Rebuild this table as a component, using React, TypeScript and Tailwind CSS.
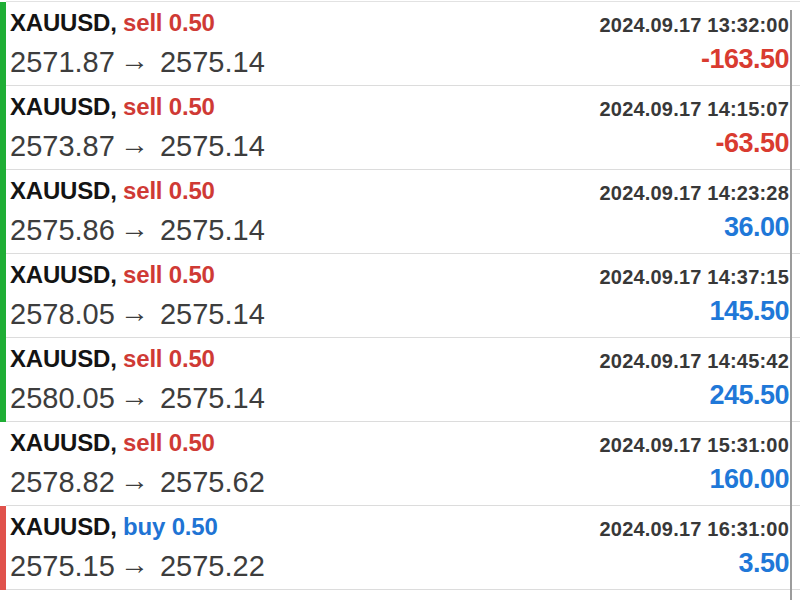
import React from "react";

type Row = {
  side: "sell" | "buy";
  open: string;
  close: string;
  time: string;
  profit: string;
  bar: "green" | "red" | "none";
};

const rows: Row[] = [
  { side: "sell", open: "2571.87", close: "2575.14", time: "2024.09.17 13:32:00", profit: "-163.50", bar: "green" },
  { side: "sell", open: "2573.87", close: "2575.14", time: "2024.09.17 14:15:07", profit: "-63.50", bar: "green" },
  { side: "sell", open: "2575.86", close: "2575.14", time: "2024.09.17 14:23:28", profit: "36.00", bar: "green" },
  { side: "sell", open: "2578.05", close: "2575.14", time: "2024.09.17 14:37:15", profit: "145.50", bar: "green" },
  { side: "sell", open: "2580.05", close: "2575.14", time: "2024.09.17 14:45:42", profit: "245.50", bar: "green" },
  { side: "sell", open: "2578.82", close: "2575.62", time: "2024.09.17 15:31:00", profit: "160.00", bar: "none" },
  { side: "buy", open: "2575.15", close: "2575.22", time: "2024.09.17 16:31:00", profit: "3.50", bar: "red" },
];

export default function App() {
  return (
    <div
      className="relative w-[800px] h-[600px] bg-white overflow-hidden pt-[1px]"
      style={{ fontFamily: '"Liberation Sans", Arial, sans-serif' }}
    >
      <div className="border-t border-[#e2e2e2] ml-[6px]" />
      {rows.map((r, i) => {
        const neg = r.profit.startsWith("-");
        return (
          <div key={i} className="flex">
            <div
              className={
                "w-[6px] shrink-0 " +
                (r.bar === "green" ? "bg-[#1fae35]" : r.bar === "red" ? "bg-[#e0524c]" : "bg-transparent")
              }
            />
            <div className="flex flex-1 justify-between h-[84px] border-b border-[#dcdcdc] pl-[4px] pr-[11px]">
              <div className="pt-[7px]">
                <div className="text-[24px] leading-[28px] font-bold text-[#141414] tracking-[-0.2px]">
                  XAUUSD,{" "}
                  <span className={r.side === "sell" ? "text-[#cf3a35]" : "text-[#1f74d4]"}>
                    {r.side} 0.50
                  </span>
                </div>
                <div className="mt-[8px] text-[29px] leading-[34px] text-[#3d3d3d] whitespace-nowrap">
                  {r.open}{" "}
                  <span className="relative -left-[3px] -top-[2px] inline-block">→</span>{" "}
                  {r.close}
                </div>
              </div>
              <div className="pt-[11px] flex flex-col items-end">
                <div className="text-[20px] leading-[24px] font-bold text-[#383838] tracking-[0.2px]">
                  {r.time}
                </div>
                <div
                  className={
                    "mt-[7px] text-[27px] leading-[30px] font-bold tracking-[-0.5px] " +
                    (neg ? "text-[#d93b30]" : "text-[#1f78d8]")
                  }
                >
                  {r.profit}
                </div>
              </div>
            </div>
          </div>
        );
      })}
      <div className="absolute left-[790px] top-[10px] bottom-0 w-[2px] bg-[#9c9c9c]" />
    </div>
  );
}
